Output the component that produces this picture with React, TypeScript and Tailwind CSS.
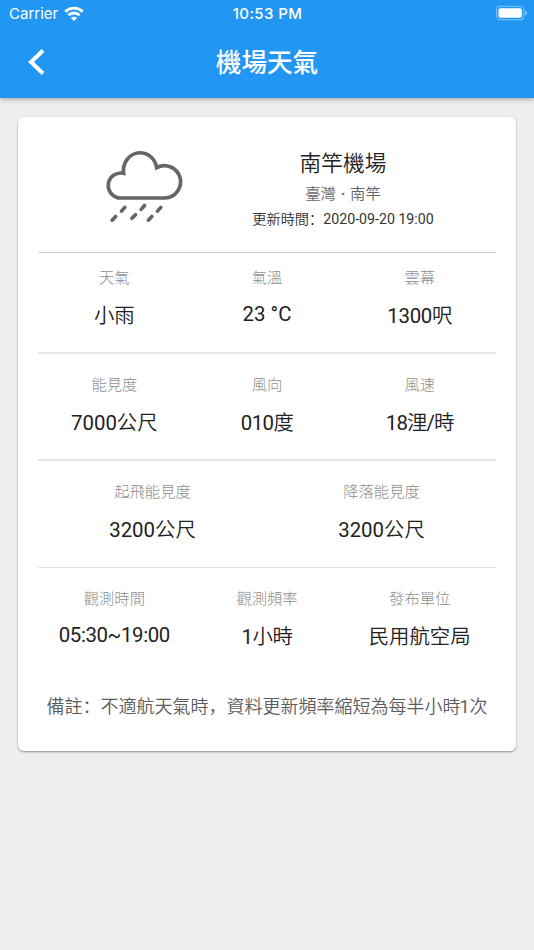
import React from 'react'

interface Field {
  label: string
  value: string
  valueClass?: string
}

interface FieldRowProps {
  fields: Field[]
  className?: string
}

const firstRow: Field[] = [
  { label: '天氣', value: '小雨' },
  { label: '氣溫', value: '23 °C' },
  { label: '雲幕', value: '1300呎', valueClass: 'tracking-[-0.3px]' }
]

const secondRow: Field[] = [
  { label: '能見度', value: '7000公尺' },
  { label: '風向', value: '010度', valueClass: 'tracking-[-0.6px]' },
  { label: '風速', value: '18浬/時', valueClass: 'tracking-[-0.9px]' }
]

const thirdRow: Field[] = [
  { label: '起飛能見度', value: '3200公尺' },
  { label: '降落能見度', value: '3200公尺' }
]

const lastRow: Field[] = [
  { label: '觀測時間', value: '05:30~19:00', valueClass: 'tracking-[-0.4px]' },
  { label: '觀測頻率', value: '1小時', valueClass: 'tracking-[-0.4px]' },
  { label: '發布單位', value: '民用航空局' }
]

// Latin runs get a slightly heavier weight than the Chinese runs around them
function MixedText({ text }: { text: string }) {
  return (
    <>
      {text.split(/([\x20-\x7e°]+)/).map((part, i) =>
        i % 2 === 1 ? (
          <span key={i} className="font-[380]">{part}</span>
        ) : (
          part
        )
      )}
    </>
  )
}

function WifiIcon() {
  return (
    <svg className="w-5 h-[15px] -mt-0.5" viewBox="0 0 20 15" fill="none" stroke="white" strokeWidth="2.9">
      <path d="M1.3 5.6 A12.6 12.6 0 0 1 18.7 5.6" />
      <path d="M4.4 9.3 A7.8 7.8 0 0 1 15.6 9.3" />
      <path d="M10 15 L6.9 12 A4.4 4.4 0 0 1 13.1 12 Z" fill="white" stroke="none" />
    </svg>
  )
}

function BatteryIcon() {
  return (
    <svg className="w-8 h-4 -mt-0.5" viewBox="0 0 32 16">
      <rect x="0.6" y="1.3" width="27.2" height="13.4" rx="3.6" fill="none" stroke="white" strokeOpacity="0.45" strokeWidth="1.1" />
      <rect x="2.5" y="3.2" width="23.4" height="9.6" rx="1.8" fill="white" />
      <path d="M29.2 5.4 C31.4 6.2 31.4 9.8 29.2 10.6 Z" fill="white" fillOpacity="0.5" />
    </svg>
  )
}

function RainIcon() {
  return (
    <svg className="w-[110px] h-[110px] shrink-0" viewBox="0 0 330 330" fill="none" stroke="#666666" strokeWidth="11">
      <path d="M93 204 A37.5 37.5 0 1 1 101 130 A50 53 0 1 1 200 113 A48.5 48.5 0 1 1 225 204 Z" />
      <path
        strokeLinecap="round"
        d="M94.5 243.5 L104.5 232 M66.5 270.5 L77 259.5 M153.5 238 L163.5 226.5 M126 265 L136.5 254 M202.5 243.5 L212.5 232 M175 270.5 L185.5 259.5"
      />
    </svg>
  )
}

function FieldRow({ fields, className = '' }: FieldRowProps) {
  return (
    <div className={`flex text-center ${className}`}>
      {fields.map((field) => {
        const latinOnly = /^[\x20-\x7e°]+$/.test(field.value)
        return (
          <div key={field.label} className="flex-1">
            <div className="text-[15.3px] leading-5 font-light text-[#8e8e8e]">{field.label}</div>
            <div
              className={`text-[20.4px] leading-7 font-[350] text-[#212121] ${latinOnly ? 'pt-3' : 'pt-[14px]'} ${field.valueClass ?? ''}`}
            >
              <MixedText text={field.value} />
            </div>
          </div>
        )
      })}
    </div>
  )
}

export default function App() {
  return (
    <div className="w-full h-[950px] bg-[#eeeeee] font-[Roboto,'Noto_Sans_CJK_SC',sans-serif]" lang="zh-Hans">
      <header className="relative h-[98px] bg-[#2196f3] text-white shadow-[0_1px_5px_rgba(0,0,0,0.35)]">
        <div className="flex items-center h-7 pl-[7px] pr-[6px] font-[Inter,sans-serif] text-[15px]">
          <div className="flex flex-1 items-center gap-1.5 pl-0.5">
            <span>Carrier</span>
            <WifiIcon />
          </div>
          <div className="-ml-0.5 text-center font-[550] tracking-[0.4px]">10:53 PM</div>
          <div className="flex flex-1 justify-end">
            <BatteryIcon />
          </div>
        </div>
        <div className="grid grid-cols-3 items-center h-[70px] pl-7 pr-7">
          <svg className="w-[18px] h-[26px] -mt-0.5" viewBox="0 0 18 26" fill="none" stroke="white" strokeWidth="4">
            <path d="M15 1.5 L3 13 L15 24.5" />
          </svg>
          <h1 className="pt-px text-center text-[25.6px] font-medium whitespace-nowrap">機場天氣</h1>
        </div>
      </header>

      <main className="pt-[19px] px-[18px]">
        <section className="h-[634px] px-5 bg-white rounded-[6px] shadow-[0_1px_2px_rgba(0,0,0,0.4)]">
          <div className="flex h-[136px] border-b border-[#cccccc]">
            <div className="w-[152px] pl-[52px] pt-[13px]">
              <RainIcon />
            </div>
            <div className="flex-1 pt-[33px] text-center">
              <h2 className="text-[21.7px] leading-7 font-[350] text-[#212121]">南竿機場</h2>
              <p className="pt-1.5 text-[15.3px] leading-5 font-[350] text-[#66666f]">
                臺灣<span className="px-[1px] font-bold"> · </span>南竿
              </p>
              <p className="pt-[5px] text-[14.2px] leading-5 font-[350] text-[#333333]">
                <MixedText text="更新時間：2020-09-20 19:00" />
              </p>
            </div>
          </div>
          <FieldRow fields={firstRow} className="h-[101px] pt-[15px] border-b-2 border-[#e8e8e8]" />
          <FieldRow fields={secondRow} className="h-[107px] pt-[21px] border-b-2 border-[#e2e2e2]" />
          <FieldRow fields={thirdRow} className="h-[107px] pt-[21px] border-b border-[#e0e0e0]" />
          <FieldRow fields={lastRow} className="h-[106px] pt-[21px]" />
          <p className="pt-[19px] text-center text-[18px] leading-7 font-[350] text-[#5c5c5c] whitespace-nowrap">
            備註：不適航天氣時，資料更新頻率縮短為每半小時<span className="-ml-px font-[380]">1</span>次
          </p>
        </section>
      </main>
    </div>
  )
}
